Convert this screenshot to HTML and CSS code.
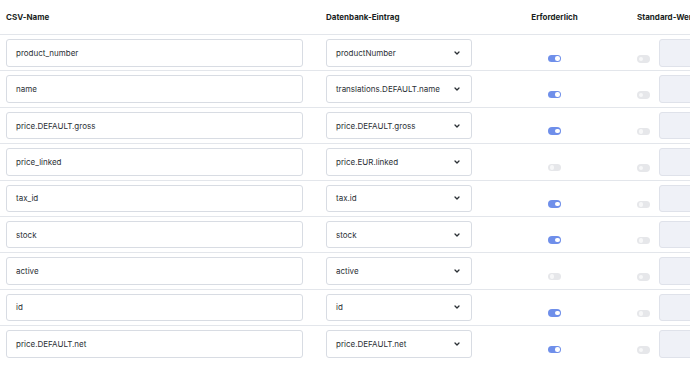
FILE: index.html
```html
<!DOCTYPE html>
<html lang="de">
<head>
  <meta charset="UTF-8">
  <title>Import-Profil Zuordnung</title>
  <link rel="stylesheet" href="styles.css">
</head>
<body>
  <div class="mapping">
    <div class="row head">
      <div>CSV-Name</div>
      <div>Datenbank-Eintrag</div>
      <div class="center">Erforderlich</div>
      <div>Standard-Wert</div>
    </div>
  </div>

  <script>
    const rows = [
      ['product_number', 'productNumber', true],
      ['name', 'translations.DEFAULT.name', true],
      ['price.DEFAULT.gross', 'price.DEFAULT.gross', true],
      ['price_linked', 'price.EUR.linked', false],
      ['tax_id', 'tax.id', true],
      ['stock', 'stock', true],
      ['active', 'active', false],
      ['id', 'id', true],
      ['price.DEFAULT.net', 'price.DEFAULT.net', true]
    ];
    const chevron = '<svg class="chev" width="6" height="4" viewBox="0 0 6 4"><path d="M1 1l2 2 2-2" fill="none" stroke="#2b3035" stroke-width="1.3" stroke-linecap="round" stroke-linejoin="round"/></svg>';
    const table = document.querySelector('.mapping');
    rows.forEach(r => {
      const d = document.createElement('div');
      d.className = 'row';
      d.innerHTML = `
        <div class="field">${r[0]}</div>
        <div class="field select"><span>${r[1]}</span>${chevron}</div>
        <div class="center toggle-cell"><span class="switch ${r[2] ? 'on' : ''}"></span></div>
        <div class="default"><span class="switch"></span><div class="field disabled"></div></div>`;
      table.appendChild(d);
    });
  </script>
</body>
</html>
```

FILE: styles.css
```css
* { box-sizing:border-box; margin:0; padding:0; }
html, body { width:100%; height:100%; overflow:hidden; background:#fff; }
body { font-family:'Inter',sans-serif; font-size:8px; color:#2b3035; }

.row {
  display:grid;
  grid-template-columns:297px 146px 119px 200px;
  column-gap:23px;
  height:36.375px;
  padding:4px 0 0 6px;
  border-bottom:1px solid #e3e6eb;
  white-space:nowrap;
}
.row:last-child { border-bottom:none; }
.row.head {
  height:35px; padding:0 0 0 6px;
  align-items:center;
  font-weight:700; color:#1b1f23;
}
.center { display:flex; justify-content:center; }

.field {
  height:27.5px;
  display:flex; align-items:center;
  padding:0 9px;
  border:1px solid #d8dce3; border-radius:3px;
  background:#fff;
}
.select { justify-content:space-between; padding-right:11px; }
.chev { display:block; }
.field.disabled { flex:1; background:#eff1f7; border-color:#dfe2ea; }

.toggle-cell { align-items:flex-start; padding-top:15.5px; }
.default { display:flex; align-items:flex-start; gap:9px; }
.default .switch { margin-top:16px; }

.switch {
  position:relative; display:block;
  width:13px; height:7.5px; border-radius:4px;
  background:#e6e7ea;
  flex:none;
}
.switch::after {
  content:''; position:absolute; top:1.5px; left:1.5px;
  width:4.5px; height:4.5px; border-radius:50%;
  background:#f7f7f8;
}
.switch.on { background:#6f8fea; }
.switch.on::after { left:auto; right:1.5px; background:#fff; }
```
